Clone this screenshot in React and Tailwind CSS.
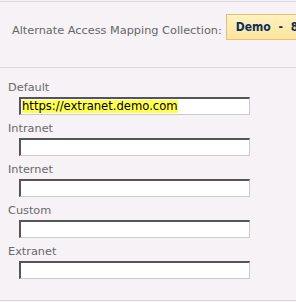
import React from 'react';

const fields = [
  { label: 'Default', value: 'https://extranet.demo.com' },
  { label: 'Intranet', value: '' },
  { label: 'Internet', value: '' },
  { label: 'Custom', value: '' },
  { label: 'Extranet', value: '' },
];

function UrlBox({ value }) {
  return (
    <div className="ml-[11px] mt-[2px] h-[18px] w-[231px] bg-white border-t-2 border-l-2 border-t-[#555555] border-l-[#555555] border-r border-b border-r-[#cccccc] border-b-[#cccccc] pl-px overflow-hidden whitespace-nowrap">
      {value && (
        <span className="inline-block align-top mt-[1px] h-[13px] leading-[13px] text-[11.6px] bg-[#ffff52] text-black">
          {value}
        </span>
      )}
    </div>
  );
}

export default function App() {
  return (
    <div
      className="w-[296px] h-[302px] overflow-hidden bg-[#f6f2f6] pt-px text-[11.3px]"
      style={{ fontFamily: '"DejaVu Sans", Verdana, sans-serif' }}
    >
      {/* collection picker */}
      <div className="h-[66px] border-t border-[#dcd8dc] flex items-start pt-[12px] pl-[12px] whitespace-nowrap">
        <span className="mt-[10px] leading-[14px] text-[#666666]">
          Alternate Access Mapping Collection:
        </span>
        <div className="ml-[4px] h-[26px] flex items-center pl-[9px] pr-3 border border-[#e0c27c] bg-gradient-to-b from-[#fff2c0] to-[#fde49b]">
          <span
            className="font-bold text-[#0a2f5e] leading-[14px] text-[12px] [word-spacing:4px]"
            style={{ fontFamily: '"DejaVu Sans Condensed", "DejaVu Sans", sans-serif' }}
          >
            Demo - 8080
          </span>
        </div>
      </div>

      {/* public urls */}
      <div className="border-t border-b border-[#dcd8dc] pt-[13px] pb-[21px] pl-[8px] flex flex-col gap-[7px]">
        {fields.map(f => (
          <div key={f.label}>
            <div className="leading-[14px] text-[#6a6a6a]">{f.label}</div>
            <UrlBox value={f.value} />
          </div>
        ))}
      </div>
    </div>
  );
}
